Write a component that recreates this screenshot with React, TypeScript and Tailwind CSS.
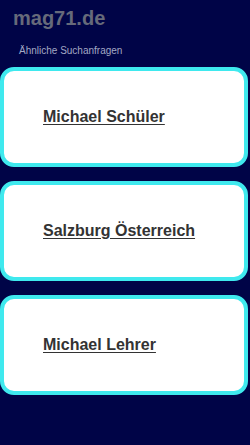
import React from 'react';

const searches: string[] = ['Michael Schüler', 'Salzburg Österreich', 'Michael Lehrer'];

const App: React.FC = () => {
  return (
    <div
      className="min-h-[445px] w-[250px] bg-[#000447] overflow-hidden"
      style={{ fontFamily: '"Liberation Sans", Arial, sans-serif' }}
    >
      <header className="pl-[13px] pt-[6px] h-[42px]">
        <h1 className="text-[20px] leading-[24px] font-bold text-[#666a7a]">mag71.de</h1>
      </header>

      <p className="pl-[19px] text-[10px] leading-[18px] text-[#a3a8c4]">Ähnliche Suchanfragen</p>

      <div className="mt-[7px] flex flex-col gap-[14px] pr-[2px]">
        {searches.map((term) => (
          <div
            key={term}
            className="h-[100px] rounded-[14px] border-[4px] border-[#3fe9ee] bg-white flex items-center pl-[39px]"
          >
            <a href="#" className="text-[16px] font-bold text-[#333333] underline underline-offset-[2px]">
              {term}
            </a>
          </div>
        ))}
      </div>
    </div>
  );
};

export default App;
